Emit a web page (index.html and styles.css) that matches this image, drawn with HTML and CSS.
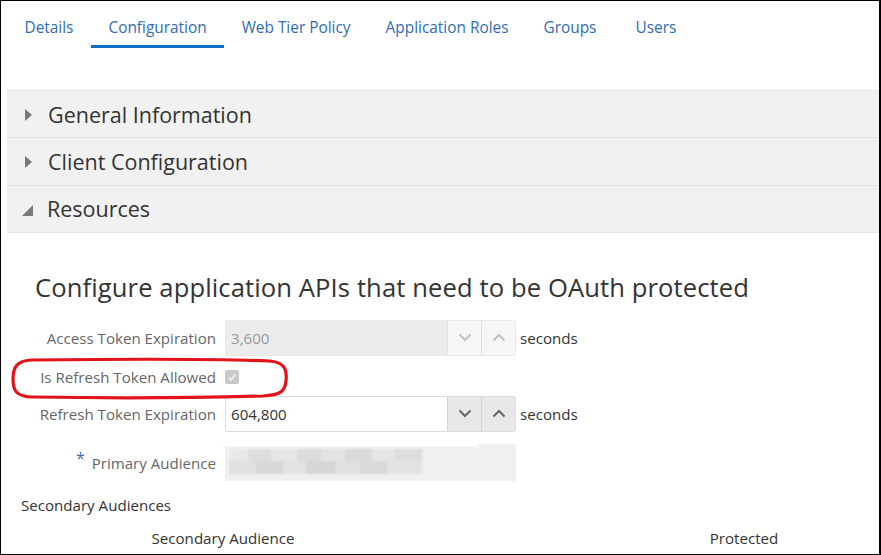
FILE: index.html
```html
<!DOCTYPE html>
<html>
<head>
<meta charset="utf-8">
<link rel="stylesheet" href="styles.css">
</head>
<body>
<div class="frame">
  <nav class="tabs">
    <span class="tab">Details</span>
    <span class="tab active">Configuration</span>
    <span class="tab">Web Tier Policy</span>
    <span class="tab">Application Roles</span>
    <span class="tab">Groups</span>
    <span class="tab tab-last">Users</span>
  </nav>

  <div class="accordion">
    <div class="acc-row"><span class="tri-right"></span><span class="acc-title">General Information</span></div>
    <div class="acc-row"><span class="tri-right"></span><span class="acc-title">Client Configuration</span></div>
    <div class="acc-row"><span class="tri-open"></span><span class="acc-title">Resources</span></div>
  </div>

  <h1 class="heading">Configure application APIs that need to be OAuth protected</h1>

  <div class="form">
    <label class="lbl">Access Token Expiration</label>
    <div class="spin disabled">
      <span class="spin-value">3,600</span>
      <span class="spin-btn"><svg width="14" height="9" viewBox="0 0 14 9"><polyline points="1.5,1.5 7,7 12.5,1.5" fill="none" stroke="currentColor" stroke-width="2"/></svg></span>
      <span class="spin-btn"><svg width="14" height="9" viewBox="0 0 14 9"><polyline points="1.5,7.5 7,2 12.5,7.5" fill="none" stroke="currentColor" stroke-width="2"/></svg></span>
    </div>
    <span class="unit">seconds</span>

    <label class="lbl lbl-check">Is Refresh Token Allowed</label>
    <div class="check-cell">
      <span class="checkbox"><svg width="12" height="12" viewBox="0 0 12 12"><polyline points="2.5,6.5 5,9 9.5,3" fill="none" stroke="#f4f4f4" stroke-width="1.6"/></svg></span>
    </div>
    <span></span>

    <label class="lbl">Refresh Token Expiration</label>
    <div class="spin">
      <span class="spin-value">604,800</span>
      <span class="spin-btn"><svg width="14" height="9" viewBox="0 0 14 9"><polyline points="1.5,1.5 7,7 12.5,1.5" fill="none" stroke="currentColor" stroke-width="2"/></svg></span>
      <span class="spin-btn"><svg width="14" height="9" viewBox="0 0 14 9"><polyline points="1.5,7.5 7,2 12.5,7.5" fill="none" stroke="currentColor" stroke-width="2"/></svg></span>
    </div>
    <span class="unit">seconds</span>

    <label class="lbl lbl-aud"><span class="req">*</span> Primary Audience</label>
    <div class="aud">
      <span class="aud-ghost"></span>
      <span class="blur"></span>
    </div>
    <span></span>
  </div>

  <div class="sec-title">Secondary Audiences</div>
  <div class="table-head">
    <span class="th th-aud">Secondary Audience</span>
    <span class="th th-prot">Protected</span>
  </div>

  <svg class="annot" width="290" height="46" viewBox="0 0 290 46">
    <path d="M30 3 C 120 2, 220 2, 268 4 C 285 5, 286 14, 285 24 C 284 34, 280 38, 262 39 C 190 41, 90 41, 32 40 C 14 40, 12 32, 12 22 C 12 10, 16 4, 30 3 Z" fill="none" stroke="#e3131b" stroke-width="3.2"/>
  </svg>
</div>
</body>
</html>
```

FILE: styles.css
```css
* { box-sizing: border-box; }

html, body {
  margin: 0;
  padding: 0;
  background: #fff;
}

body {
  font-family: "Open Sans", "Noto Sans", "Liberation Sans", sans-serif;
  color: #333;
}

.frame {
  position: relative;
  width: 881px;
  height: 555px;
  border: 1px solid #000;
  border-right-width: 2px;
  overflow: hidden;
}

.tabs {
  display: flex;
  padding-left: 6px;
  height: 47px;
}

.tab {
  padding: 17px 17.5px 0;
  font-size: 15.4px;
  line-height: 20px;
  color: #2f6db3;
  border-bottom: 3px solid transparent;
  white-space: nowrap;
}

.tab-last { margin-left: 4px; }

.tab.active {
  border-bottom-color: #0b6fc7;
}

.accordion {
  margin: 42px 0 0 6px;
  background: #f1f1f1;
  border-top: 1px solid #e4e4e4;
}

.acc-row {
  display: flex;
  align-items: center;
  height: 47.3px;
  border-bottom: 1px solid #e2e2e2;
  padding-left: 17px;
}

.acc-title {
  font-size: 21.5px;
  color: #333;
  margin-left: 14px;
  line-height: 28px;
  padding-top: 1px;
}

.tri-right {
  width: 0;
  height: 0;
  margin-top: 1px;
  border-top: 6px solid transparent;
  border-bottom: 6px solid transparent;
  border-left: 7px solid #777;
  margin-left: 1px;
  margin-right: 2px;
}

.tri-open {
  width: 0;
  height: 0;
  margin-top: 4px;
  border-bottom: 11px solid #7a7a7a;
  border-left: 11px solid transparent;
  margin-left: -2px;
}

.heading {
  margin: 37px 0 0 34px;
  font-size: 25.6px;
  font-weight: 400;
  line-height: 36px;
  color: #333;
  letter-spacing: 0.1px;
}

.form {
  display: grid;
  grid-template-columns: 215px 291px auto;
  column-gap: 9px;
  grid-template-rows: 36px 40px 36px 49px;
  align-items: center;
  margin-top: 14px;
}

.form > .unit { margin-left: -5px; }

.lbl {
  text-align: right;
  font-size: 15.1px;
  color: #666;
  white-space: nowrap;
}

.lbl-check { margin-top: 2px; }

.lbl-aud {
  align-self: end;
  padding-bottom: 7px;
}

.req {
  color: #2f6db3;
  font-size: 16px;
  position: relative;
  top: -5px;
  margin-right: 3px;
}

.unit {
  font-size: 15.1px;
  color: #333;
}

.spin {
  display: flex;
  height: 36px;
  border: 1px solid #dcdcdc;
  border-radius: 2px;
  background: #fff;
}

.spin-value {
  flex: 1;
  padding-left: 5px;
  font-size: 15.1px;
  line-height: 34px;
  color: #333;
}

.spin-btn {
  width: 34px;
  display: flex;
  align-items: center;
  justify-content: center;
  background: #e8e8e8;
  border-left: 1px solid #d4d4d4;
  color: #666;
}

.spin.disabled {
  background: #ececec;
  border-color: #e8e8e8;
}

.spin.disabled .spin-value { color: #999; }

.spin.disabled .spin-btn {
  background: #f6f6f6;
  border-left-color: #e0e0e0;
  color: #c4c4c4;
}

.check-cell {
  display: flex;
  align-items: center;
  padding-top: 2px;
}

.checkbox {
  width: 14px;
  height: 14px;
  border-radius: 2px;
  background: #c9c9c9;
  display: flex;
  align-items: center;
  justify-content: center;
}

.aud {
  position: relative;
  align-self: end;
  height: 37px;
  background: #f0f0f0;
  border-radius: 2px;
}

.aud-ghost {
  position: absolute;
  left: -8px;
  top: -12px;
  width: 261px;
  height: 14px;
  background: #fff;
  box-shadow: 0 1px 0 #f6f6f6;
}

.blur {
  position: absolute;
  left: 4px;
  top: 5px;
  width: 193px;
  height: 25px;
  filter: blur(1.2px);
  background:
    linear-gradient(90deg, #e9e9e9 0 10%, #dedede 10% 22%, #e6e6e6 22% 35%, #dcdcdc 35% 48%, #e4e4e4 48% 60%, #dadada 60% 74%, #e6e6e6 74% 86%, #dddddd 86% 100%) top / 100% 12px no-repeat,
    linear-gradient(90deg, #e1e1e1 0 14%, #d8d8d8 14% 28%, #e2e2e2 28% 40%, #d6d6d6 40% 55%, #e0e0e0 55% 68%, #d9d9d9 68% 82%, #e3e3e3 82% 100%) bottom / 100% 13px no-repeat;
}

.sec-title {
  margin: 14px 0 0 20px;
  font-size: 15.1px;
  line-height: 20px;
  color: #333;
}

.table-head {
  display: grid;
  grid-template-columns: 444px 1fr 270px;
  margin-top: 13px;
}

.th {
  font-size: 15.1px;
  line-height: 20px;
  color: #333;
  text-align: center;
}

.th-aud { grid-column: 1; }
.th-prot { grid-column: 3; }

.annot {
  position: absolute;
  left: 0;
  top: 356px;
}
```
